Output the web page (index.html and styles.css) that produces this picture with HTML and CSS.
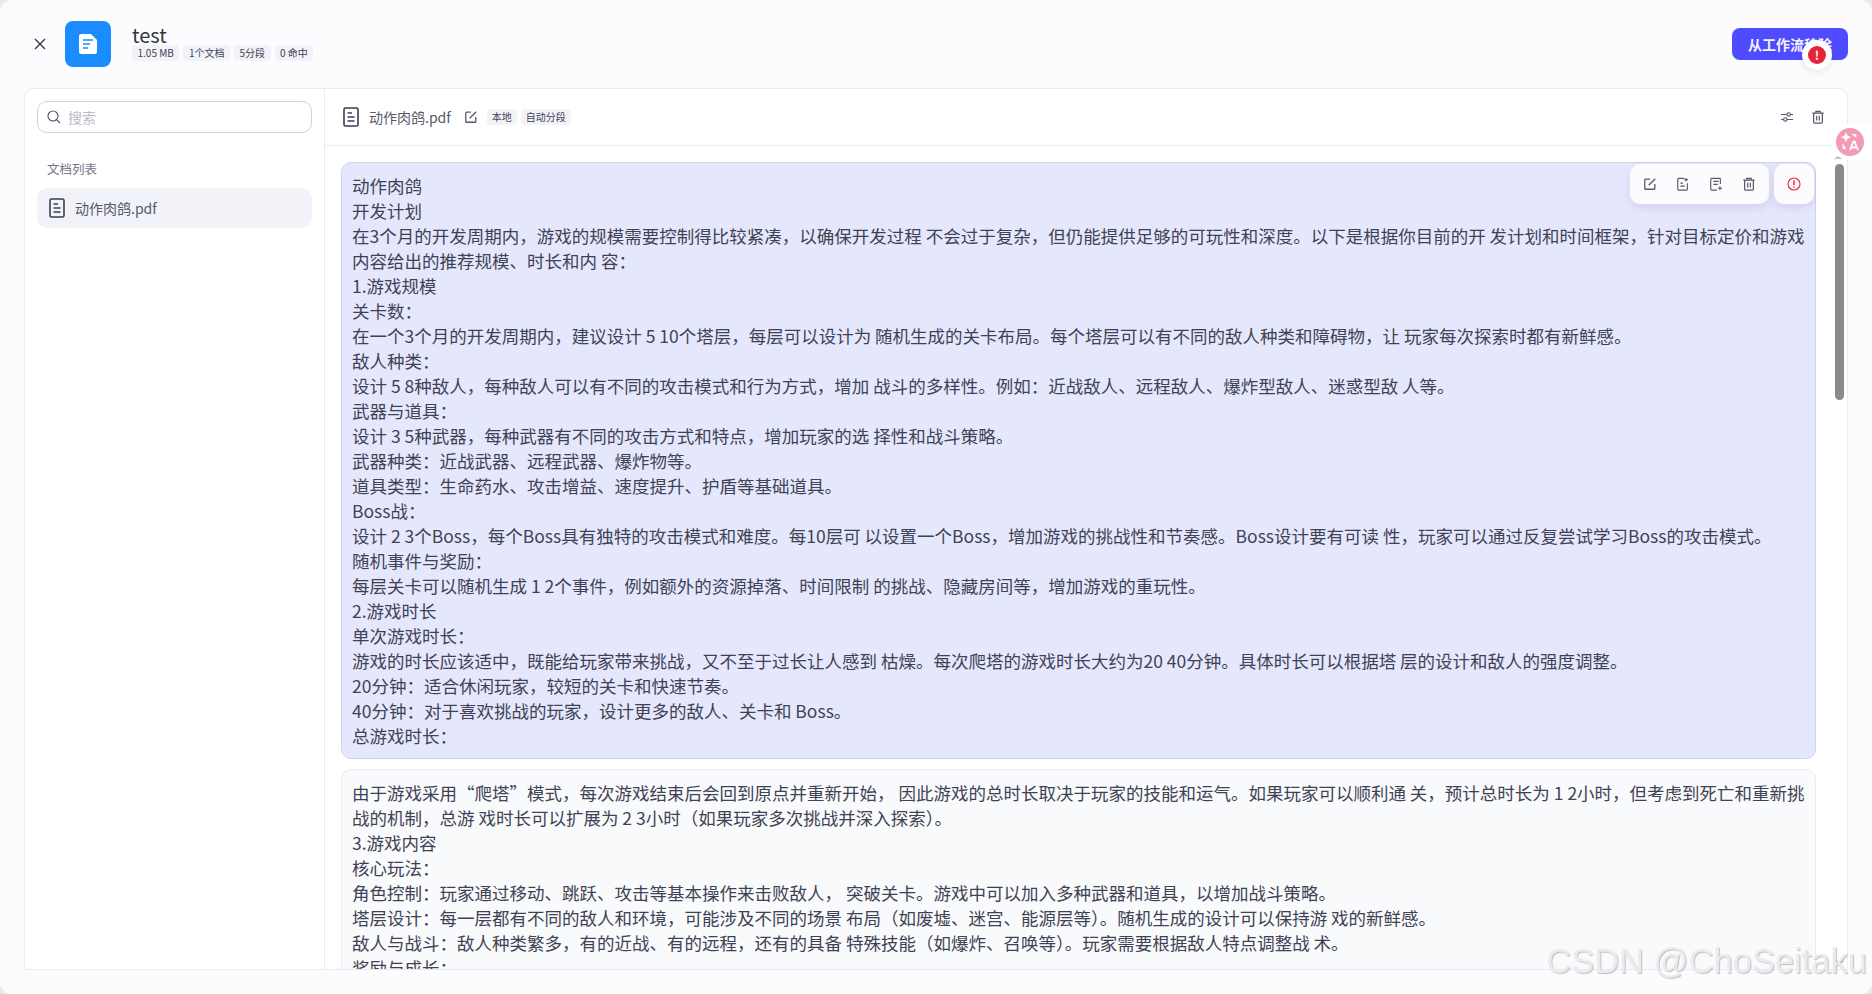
FILE: index.html
```html
<!DOCTYPE html>
<html lang="zh-CN">

<head>
    <meta charset="UTF-8">
    <title>test</title>
    <link rel="stylesheet" href="styles.css">
</head>

<body>
    <svg class="defs" width="0" height="0">
        <symbol id="doc" viewBox="0 0 16 20">
            <path d="M2.5 1h11a1.5 1.5 0 0 1 1.5 1.5v15a1.5 1.5 0 0 1-1.5 1.5h-11A1.500 1.500 0 0 1 1 17.500v-15A1.500 1.500 0 0 1 2.500 1zM4.500 6h4.500M4.500 10h7M4.500 14h7" fill="none" stroke="currentColor" stroke-width="1.600"/>
        </symbol>
        <symbol id="edit" viewBox="0 0 16 16">
            <path d="M8 2.500H3a1 1 0 0 0-1 1V13a1 1 0 0 0 1 1h9.500a1 1 0 0 0 1-1V8M6.500 9.500 14 2" fill="none" stroke="currentColor" stroke-width="1.500"/>
        </symbol>
        <symbol id="trash" viewBox="0 0 16 16">
            <path d="M1.500 3.500h13M5.500 3.500V1.500h5v2M3 3.500V14a1 1 0 0 0 1 1h8a1 1 0 0 0 1-1V3.500M6.500 6.500v5.500M9.500 6.500v5.500" fill="none" stroke="currentColor" stroke-width="1.400"/>
        </symbol>
    </svg>

    <div class="page">
        <header class="top">
            <svg class="close" viewBox="0 0 12 12"><path d="M1 1l10 10M11 1 1 11" stroke="#333644" stroke-width="1.400"/></svg>
            <div class="logo">
                <svg viewBox="0 0 18 20" width="18" height="20"><path d="M2 0h10l6 6v12a2 2 0 0 1-2 2H2a2 2 0 0 1-2-2V2a2 2 0 0 1 2-2z" fill="#fff"/><path d="M4 6h10M4 10h7M4 14h5" stroke="#1a8cff" stroke-width="1.600"/></svg>
            </div>
            <div class="title-box">
                <div class="title">test</div>
                <div class="tags">
                    <span class="tag">1.05 MB</span>
                    <span class="tag">1个文档</span>
                    <span class="tag">5分段</span>
                    <span class="tag">0 命中</span>
                </div>
            </div>
            <div class="btn-wrap">
                <button class="btn">从工作流移除</button>
                <span class="alert"><i>!</i></span>
            </div>
        </header>

        <div class="panel">
            <aside class="side">
                <div class="search">
                    <svg viewBox="0 0 14 14" width="14" height="14"><circle cx="6" cy="6" r="5" fill="none" stroke="#555a6a" stroke-width="1.200"/><path d="M9.800 9.800 13 13" stroke="#555a6a" stroke-width="1.200"/></svg>
                    <span>搜索</span>
                </div>
                <div class="side-title">文档列表</div>
                <div class="side-item">
                    <svg class="doc-icon"><use href="#doc"/></svg>
                    <span>动作肉鸽.pdf</span>
                </div>
            </aside>

            <main class="main">
                <div class="doc-head">
                    <svg class="doc-icon"><use href="#doc"/></svg>
                    <span class="doc-name">动作肉鸽.pdf</span>
                    <svg class="ico edit-ico"><use href="#edit"/></svg>
                    <span class="tag small first">本地</span>
                    <span class="tag small">自动分段</span>
                    <div class="head-actions">
                        <svg class="ico" viewBox="0 0 14 14"><path d="M1 4.500h6M10.500 4.500H13M3.500 9.500H1M7 9.500h6" stroke="#555a6a" stroke-width="1.100"/><circle cx="8.700" cy="4.500" r="1.700" fill="none" stroke="#555a6a" stroke-width="1.100"/><circle cx="5.300" cy="9.500" r="1.700" fill="none" stroke="#555a6a" stroke-width="1.100"/></svg>
                        <svg class="ico"><use href="#trash"/></svg>
                    </div>
                </div>

                <div class="body">
                    <div class="cards">
                        <div class="card active">
                            <div class="float-tools">
                                <div class="tool-box">
                                    <svg class="ico"><use href="#edit"/></svg>
                                    <svg class="ico" viewBox="0 0 16 16"><path d="M9.500 1.500H3a1 1 0 0 0-1 1V14a1 1 0 0 0 1 1h9a1 1 0 0 0 1-1V7M5 7h3M5 10.500h5M11.500 1v4M9.500 3h4" fill="none" stroke="currentColor" stroke-width="1.300"/></svg>
                                    <svg class="ico" viewBox="0 0 16 16"><path d="M13 8V2.500a1 1 0 0 0-1-1H3a1 1 0 0 0-1 1V14a1 1 0 0 0 1 1h6M5 5h6M5 8.500h5M12.500 10.500v4.500M10 12.800h5" fill="none" stroke="currentColor" stroke-width="1.300"/></svg>
                                    <svg class="ico"><use href="#trash"/></svg>
                                </div>
                                <div class="tool-box single">
                                    <svg class="ico" viewBox="0 0 14 14"><circle cx="7" cy="7" r="6" fill="none" stroke="#e5243b" stroke-width="1.100"/><path d="M7 3.500v4.500M7 9.500v1.200" stroke="#e5243b" stroke-width="1.500"/></svg>
                                </div>
                            </div>
                            <p>动作肉鸽</p>
                            <p>开发计划</p>
                            <p>在3个月的开发周期内，游戏的规模需要控制得比较紧凑，以确保开发过程 不会过于复杂，但仍能提供足够的可玩性和深度。以下是根据你目前的开 发计划和时间框架，针对目标定价和游戏内容给出的推荐规模、时长和内 容：</p>
                            <p>1.游戏规模</p>
                            <p>关卡数：</p>
                            <p>在一个3个月的开发周期内，建议设计 5 10个塔层，每层可以设计为 随机生成的关卡布局。每个塔层可以有不同的敌人种类和障碍物，让 玩家每次探索时都有新鲜感。</p>
                            <p>敌人种类：</p>
                            <p>设计 5 8种敌人，每种敌人可以有不同的攻击模式和行为方式，增加 战斗的多样性。例如：近战敌人、远程敌人、爆炸型敌人、迷惑型敌 人等。</p>
                            <p>武器与道具：</p>
                            <p>设计 3 5种武器，每种武器有不同的攻击方式和特点，增加玩家的选 择性和战斗策略。</p>
                            <p>武器种类：近战武器、远程武器、爆炸物等。</p>
                            <p>道具类型：生命药水、攻击增益、速度提升、护盾等基础道具。</p>
                            <p>Boss战：</p>
                            <p>设计 2 3个Boss，每个Boss具有独特的攻击模式和难度。每10层可 以设置一个Boss，增加游戏的挑战性和节奏感。Boss设计要有可读 性，玩家可以通过反复尝试学习Boss的攻击模式。</p>
                            <p>随机事件与奖励：</p>
                            <p>每层关卡可以随机生成 1 2个事件，例如额外的资源掉落、时间限制 的挑战、隐藏房间等，增加游戏的重玩性。</p>
                            <p>2.游戏时长</p>
                            <p>单次游戏时长：</p>
                            <p>游戏的时长应该适中，既能给玩家带来挑战，又不至于过长让人感到 枯燥。每次爬塔的游戏时长大约为20 40分钟。具体时长可以根据塔 层的设计和敌人的强度调整。</p>
                            <p>20分钟：适合休闲玩家，较短的关卡和快速节奏。</p>
                            <p>40分钟：对于喜欢挑战的玩家，设计更多的敌人、关卡和 Boss。</p>
                            <p>总游戏时长：</p>
                        </div>
                        <div class="card">
                            <p>由于游戏采用“爬塔”模式，每次游戏结束后会回到原点并重新开始， 因此游戏的总时长取决于玩家的技能和运气。如果玩家可以顺利通 关，预计总时长为 1 2小时，但考虑到死亡和重新挑战的机制，总游 戏时长可以扩展为 2 3小时（如果玩家多次挑战并深入探索）。</p>
                            <p>3.游戏内容</p>
                            <p>核心玩法：</p>
                            <p>角色控制：玩家通过移动、跳跃、攻击等基本操作来击败敌人， 突破关卡。游戏中可以加入多种武器和道具，以增加战斗策略。</p>
                            <p>塔层设计：每一层都有不同的敌人和环境，可能涉及不同的场景 布局（如废墟、迷宫、能源层等）。随机生成的设计可以保持游 戏的新鲜感。</p>
                            <p>敌人与战斗：敌人种类繁多，有的近战、有的远程，还有的具备 特殊技能（如爆炸、召唤等）。玩家需要根据敌人特点调整战 术。</p>
                            <p>奖励与成长：</p>
                        </div>
                    </div>
                    <div class="scroll">
                        <div class="arrow"></div>
                        <div class="thumb"></div>
                        <div class="arrow down"></div>
                    </div>
                </div>
            </main>
        </div>
    </div>

    <div class="translate">
        <span class="translate-dot">
            <svg viewBox="0 0 20 20" width="20" height="20"><path d="M6 1l1.200 3 3 1.200-3 1.200L6 9.400 4.800 6.400l-3-1.200 3-1.200zM12 2.500h4v3M3 12v4.500h3" fill="#fff" stroke="#fff" stroke-width=".8"/><path d="M10 18l3.500-8.500h1L18 18M11.300 15.500h5.400" fill="none" stroke="#fff" stroke-width="1.800"/></svg>
        </span>
    </div>
    <div class="watermark">CSDN @ChoSeitaku</div>
</body>

</html>
```

FILE: styles.css
```css
* {
    margin: 0;
    padding: 0;
    box-sizing: border-box;
}

html,
body {
    height: 100%;
    overflow: hidden;
}

body {
    font-family: "Noto Sans CJK SC", "Noto Sans", sans-serif;
    font-size: 17.5px;
    line-height: 25px;
    color: #3f4254;
    background: #e9e9ec;
}

.defs {
    display: none;
}

.page {
    height: 100%;
    display: flex;
    flex-direction: column;
    background: #fcfcfe;
    border-radius: 12px;
}

.top {
    flex: 0 0 88px;
    display: flex;
    align-items: center;
    padding: 0 24px 0 34px;
}

.close {
    width: 12px;
    height: 12px;
    margin-right: 19px;
}

.logo {
    width: 46px;
    height: 46px;
    border-radius: 8px;
    background: #1a8cff;
    display: flex;
    align-items: center;
    justify-content: center;
    margin-right: 21px;
}

.title-box {
    flex: 1;
    padding-bottom: 3px;
}

.title {
    font-size: 20px;
    line-height: 21px;
    color: #333644;
}

.tags {
    display: flex;
    gap: 4px;
}

.tag {
    display: inline-block;
    height: 16px;
    line-height: 16px;
    font-size: 10px;
    padding: 0 5.5px;
    border-radius: 4px;
    background: #f2f3f8;
    color: #3f4254;
    white-space: nowrap;
}

.tag.small {
    padding: 0 5px;
    margin-left: 4px;
}

.tag.first {
    margin-left: 9px;
}

.btn-wrap {
    position: relative;
}

.btn {
    display: block;
    width: 116px;
    height: 32px;
    border: 0;
    border-radius: 8px;
    background: #4f4bff;
    color: #f4f4ff;
    font-family: inherit;
    font-size: 14px;
    font-weight: 700;
}

.alert {
    position: absolute;
    left: 70px;
    top: 12px;
    width: 30px;
    height: 30px;
    border-radius: 50%;
    background: #fff;
    display: flex;
    align-items: center;
    justify-content: center;
    box-shadow: 0 2px 6px rgba(40, 40, 90, .1);
}

.alert i {
    width: 18px;
    height: 18px;
    border-radius: 50%;
    background: #e5243b;
    color: #fff;
    font-size: 12px;
    font-style: normal;
    font-weight: 700;
    line-height: 18px;
    text-align: center;
}

.panel {
    flex: 1;
    min-height: 0;
    display: flex;
    margin: 0 24px 24px 24px;
    background: #fff;
    border: 1px solid #e9ebf2;
    border-radius: 10px 10px 0 0;
    overflow: hidden;
}

.side {
    flex: 0 0 300px;
    padding: 12px 12px 0 12px;
    border-right: 1px solid #e9ebf2;
}

.search {
    height: 32px;
    display: flex;
    align-items: center;
    gap: 7px;
    padding-left: 9px;
    border: 1px solid #cdd2e2;
    border-radius: 10px;
    font-size: 14px;
    color: #b9bcc8;
}

.side-title {
    font-size: 12.5px;
    line-height: 18px;
    color: #74778a;
    margin: 27px 0 10px 10px;
}

.side-item {
    height: 40px;
    display: flex;
    align-items: center;
    gap: 10px;
    padding-left: 12px;
    background: #f2f3f8;
    border-radius: 10px;
    font-size: 14px;
    color: #555869;
}

.doc-icon {
    width: 16px;
    height: 20px;
    color: #3a3e50;
}

.main {
    flex: 1;
    min-width: 0;
    display: flex;
    flex-direction: column;
}

.doc-head {
    flex: 0 0 57px;
    display: flex;
    align-items: center;
    padding: 0 22px 0 18px;
    border-bottom: 1px solid #e9ebf2;
}

.doc-name {
    font-size: 14px;
    color: #555869;
    margin: 0 13px 0 10px;
}

.ico {
    width: 14px;
    height: 14px;
    color: #555a6a;
}

.head-actions {
    margin-left: auto;
    display: flex;
    gap: 17px;
}

.body {
    flex: 1;
    min-height: 0;
    display: flex;
}

.cards {
    flex: 1;
    min-width: 0;
    padding: 16px 0 0 16px;
    overflow: hidden;
}

.card {
    position: relative;
    padding: 10px 9px 10px 10px;
    margin-bottom: 10px;
    border: 1px solid #e9ebf2;
    border-radius: 10px;
    background: #f9fafc;
}

.card.active {
    background: #e5e8fd;
    border-color: #cdd2f0;
}

.float-tools {
    position: absolute;
    top: 1px;
    right: 1px;
    display: flex;
    gap: 5px;
}

.tool-box {
    height: 40px;
    display: flex;
    align-items: center;
    gap: 19px;
    padding: 0 13px;
    background: #fcfcfe;
    border-radius: 10px;
    box-shadow: 0 4px 10px rgba(60, 60, 120, .12);
}

.scroll {
    flex: 0 0 31px;
    display: flex;
    flex-direction: column;
    align-items: center;
    padding: 9px 0 4px 15px;
}

.arrow {
    width: 0;
    height: 0;
    border-left: 5px solid transparent;
    border-right: 5px solid transparent;
    border-bottom: 4px solid #c4c4c4;
    margin-bottom: 5px;
}

.arrow.down {
    margin-top: auto;
    margin-bottom: 0;
    border-bottom: 0;
    border-top: 4px solid #8a8a8a;
}

.thumb {
    width: 9px;
    height: 236px;
    border-radius: 5px;
    background: #8a8a8a;
}

.translate {
    position: fixed;
    top: 124px;
    right: 0;
    width: 41px;
    height: 36px;
    display: flex;
    align-items: center;
    padding-left: 5px;
    background: #fff;
    border-radius: 18px 0 0 18px;
}

.translate-dot {
    width: 28px;
    height: 28px;
    border-radius: 50%;
    background: #f29bb5;
    display: flex;
    align-items: center;
    justify-content: center;
}

.watermark {
    position: fixed;
    right: 5px;
    bottom: 15px;
    font-family: "Liberation Sans", sans-serif;
    font-size: 34.5px;
    line-height: 36px;
    color: #ebebed;
    text-shadow: 1px 1px 1px #c0c0c4;
}
```
